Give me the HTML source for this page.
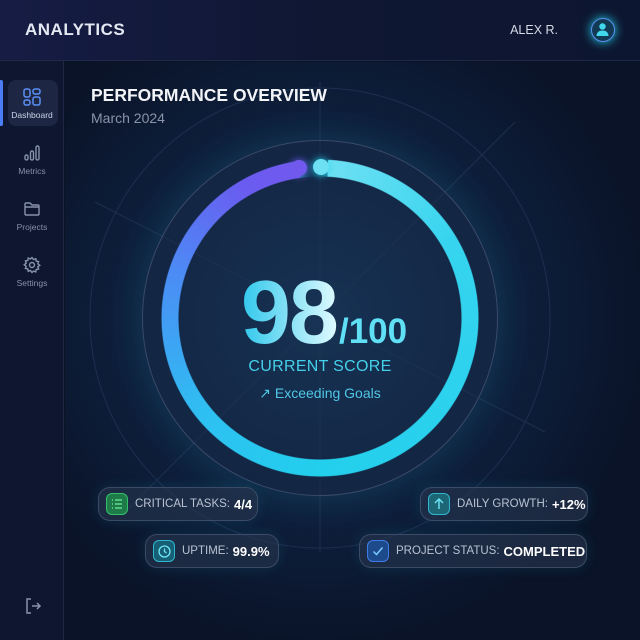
<!DOCTYPE html>
<html><head><meta charset="utf-8"><style>
*{margin:0;padding:0;box-sizing:border-box}
body{width:640px;height:640px;overflow:hidden;background:#0a1226;font-family:"Liberation Sans",sans-serif;color:#fff;position:relative}
.top{position:absolute;left:0;top:0;width:640px;height:61px;background:linear-gradient(90deg,#161c44,#0f1733 50%,#0d1630);border-bottom:1px solid #1f2a48}
.top h1{position:absolute;left:25px;top:20px;font-size:17px;font-weight:700;letter-spacing:.5px;color:#e4e8f2}
.user{position:absolute;right:82px;top:23px;font-size:12.5px;color:#d5dae6}
.av{position:absolute;left:591px;top:18px;width:24px;height:24px;border-radius:50%;border:1.5px solid #5b8ff0;box-shadow:0 0 10px #22d3ee;background:#133a55}
.side{position:absolute;left:0;top:61px;width:64px;height:579px;background:#0e1630;border-right:1px solid #1d2845}
.nav{position:absolute;left:0;width:64px;text-align:center;font-size:8.5px;color:#8792ab}
.nav svg{display:block;margin:0 auto 4px}
.act{position:absolute;left:8px;top:80px;width:50px;height:46px;border-radius:8px;background:#1d2744}
.bar{position:absolute;left:0;top:80px;width:3px;height:46px;background:#4b7cf3;border-radius:0 2px 2px 0}
.main{position:absolute;left:65px;top:62px;right:0;bottom:0;background:radial-gradient(circle at 255px 256px,#14365a 0,#0f2240 170px,#0a1328 330px),#0a1328}
.t1{position:absolute;left:91px;top:85px;font-size:17.5px;font-weight:700;color:#f2f4f8}
.t2{position:absolute;left:91px;top:110px;font-size:14px;color:#8a93a8}
.glass{position:absolute;left:142px;top:140px;width:356px;height:356px;border-radius:50%;border:1px solid #3a4a6a;background:rgba(30,45,75,.35);box-shadow:0 0 40px rgba(34,211,238,.15)}
.ring{position:absolute;left:161px;top:159px;width:318px;height:318px;border-radius:50%;
background:conic-gradient(from 0deg,transparent 0 3deg,#6ee0f3 3deg,#36d4ef 60deg,#22cfec 180deg,#2ec0f2 230deg,#4a8ef5 285deg,#6a5cf0 330deg,#7259ee 352deg,transparent 352deg);
-webkit-mask:radial-gradient(circle,transparent 141px,#000 142px,#000 158px,transparent 159px);
filter:drop-shadow(0 0 8px #22d3ee)}
.cap{position:absolute;width:16px;height:16px;border-radius:50%}
.score{position:absolute;left:0;width:640px;text-align:center}
.big{top:262px;font-size:90px;font-weight:700;letter-spacing:-2px;padding-left:8px}
.big b{background:linear-gradient(90deg,#30c8ec,#dffaff);-webkit-background-clip:text;color:transparent}
.big span{font-size:35px;color:#5fe0f5;letter-spacing:0;margin-left:2px}
.cs{top:358px;font-size:16px;color:#45d0ea;letter-spacing:.3px}
.eg{top:385px;font-size:14px;color:#4fc6e6}
.pill{position:absolute;height:34px;border-radius:12px;border:1px solid #3b4b66;background:rgba(40,55,80,.6);font-size:11.5px;color:#b8c2d2;display:flex;align-items:center;padding-left:7px;box-shadow:0 0 14px rgba(34,211,238,.12);white-space:nowrap}
.pill b{color:#fff;font-size:13px;margin-left:4px}
.ic{width:22px;height:22px;border-radius:6px;margin-right:7px;display:flex;align-items:center;justify-content:center;flex:none}
</style></head><body>
<div class="top"><h1>ANALYTICS</h1><div class="user">ALEX R.</div>
<div class="av"><svg width="21" height="21" viewBox="0 0 21 21"><circle cx="10.5" cy="7.5" r="3.2" fill="#3fd8ec"/><path d="M4.5 17c0-4 3-5.5 6-5.5s6 1.5 6 5.5z" fill="#3fd8ec"/></svg></div></div>
<div class="side"></div>
<div class="act"></div><div class="bar"></div>
<div class="nav" style="top:88px;color:#c9d2e6"><svg width="18" height="18" viewBox="0 0 18 18" fill="none" stroke="#5b8ff5" stroke-width="1.5"><rect x="1" y="1" width="6" height="8" rx="2"/><rect x="10" y="1" width="7" height="5" rx="2"/><rect x="1" y="12" width="6" height="5" rx="2"/><rect x="10" y="9" width="7" height="8" rx="2"/></svg>Dashboard</div>
<div class="nav" style="top:144px"><svg width="18" height="18" viewBox="0 0 18 18" fill="none" stroke="#8792ab" stroke-width="1.4"><rect x="2" y="11" width="3" height="5" rx="1.5"/><rect x="7.5" y="7" width="3" height="9" rx="1.5"/><rect x="13" y="2" width="3" height="14" rx="1.5"/></svg>Metrics</div>
<div class="nav" style="top:200px"><svg width="18" height="18" viewBox="0 0 18 18" fill="none" stroke="#8792ab" stroke-width="1.4"><path d="M2 4a1 1 0 0 1 1-1h4l2 2h6a1 1 0 0 1 1 1v8a1 1 0 0 1-1 1H3a1 1 0 0 1-1-1z M2 7h14"/></svg>Projects</div>
<div class="nav" style="top:256px"><svg width="18" height="18" viewBox="0 0 18 18" fill="none" stroke="#8792ab" stroke-width="1.4"><circle cx="9" cy="9" r="2.5"/><path d="M9 1.5l1.5 2 2.3-.8.4 2.4 2.4.4-.8 2.3 2 1.5-2 1.5.8 2.3-2.4.4-.4 2.4-2.3-.8L9 16.5l-1.5-2-2.3.8-.4-2.4-2.4-.4.8-2.3-2-1.5 2-1.5-.8-2.3 2.4-.4.4-2.4 2.3.8z"/></svg>Settings</div>
<svg style="position:absolute;left:24px;top:597px" width="18" height="18" viewBox="0 0 18 18" fill="none" stroke="#8792ab" stroke-width="1.5"><path d="M7 2H3v14h4M8 9h8M13 6l3 3-3 3"/></svg>
<div class="main"></div>
<svg style="position:absolute;left:65px;top:62px" width="575" height="578"><g stroke="#22385a" stroke-width="1" fill="none" opacity=".7"><circle cx="255" cy="256" r="230"/><line x1="30" y1="140" x2="480" y2="370"/><line x1="450" y1="60" x2="60" y2="450"/><line x1="255" y1="20" x2="255" y2="490"/></g></svg>
<div class="t1">PERFORMANCE OVERVIEW</div><div class="t2">March 2024</div>
<div class="glass"></div>
<div class="ring"></div>
<div class="cap" style="left:313px;top:159px;background:#6ee0f3;box-shadow:0 0 8px #22d3ee"></div>
<div class="cap" style="left:291px;top:160px;background:#7259ee;box-shadow:0 0 8px #6a5cf0"></div>
<div class="score big"><b>98</b><span>/100</span></div>
<div class="score cs">CURRENT SCORE</div>
<div class="score eg">↗ Exceeding Goals</div>
<div class="pill" style="left:98px;top:487px;width:160px"><div class="ic" style="background:#1f7a4a;border:1px solid #34c06a"><svg width="12" height="12" viewBox="0 0 12 12" stroke="#6ef09a" stroke-width="1.3"><path d="M1 2h1M4 2h7M1 6h1M4 6h7M1 10h1M4 10h7"/></svg></div>CRITICAL TASKS:<b>4/4</b></div>
<div class="pill" style="left:420px;top:487px;width:168px"><div class="ic" style="background:#1c6675;border:1px solid #2fb7cf"><svg width="12" height="12" viewBox="0 0 12 12" stroke="#6fe6f6" stroke-width="1.4" fill="none"><path d="M6 11V1M2 5l4-4 4 4"/></svg></div>DAILY GROWTH:<b>+12%</b></div>
<div class="pill" style="left:145px;top:534px;width:134px"><div class="ic" style="background:#175f74;border:1px solid #2fb7cf"><svg width="13" height="13" viewBox="0 0 13 13" stroke="#6fe6f6" stroke-width="1.3" fill="none"><circle cx="6.5" cy="6.5" r="5.5"/><path d="M6.5 3.5v3l2 1.5"/></svg></div>UPTIME:<b>99.9%</b></div>
<div class="pill" style="left:359px;top:534px;width:228px"><div class="ic" style="background:#1d4a8a;border:1px solid #3f7be8"><svg width="12" height="12" viewBox="0 0 12 12" stroke="#7ac8ff" stroke-width="1.5" fill="none"><path d="M1.5 6.5l3 3 6-7"/></svg></div>PROJECT STATUS:<b>COMPLETED</b></div>
</body></html>
